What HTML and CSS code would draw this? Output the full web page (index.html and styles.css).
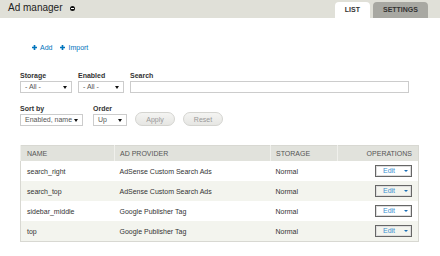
FILE: index.html
```html
<!DOCTYPE html>
<html>
<head>
  <title>Ad manager</title>
  <link rel="stylesheet" href="styles.css">
</head>
<body>
  <div class="top">
    <h1>Ad manager <span class="dot"></span></h1>
    <ul class="tabs">
      <li class="active">List</li>
      <li>Settings</li>
    </ul>
  </div>

  <div class="content">
    <ul class="actions">
      <li><a href="#"><svg class="plus" viewBox="0 0 6 6"><path d="M2 0h2v2h2v2h-2v2h-2v-2h-2v-2h2z"/></svg>Add</a></li>
      <li><a href="#"><svg class="plus" viewBox="0 0 6 6"><path d="M2 0h2v2h2v2h-2v2h-2v-2h-2v-2h2z"/></svg>Import</a></li>
    </ul>

    <!-- Filters -->
    <div class="filters">
      <div class="row">
        <div class="field">
          <label>Storage</label>
          <div class="select w-storage">- All -</div>
        </div>
        <div class="field">
          <label>Enabled</label>
          <div class="select w-enabled">- All -</div>
        </div>
        <div class="field">
          <label>Search</label>
          <div class="text w-search"></div>
        </div>
      </div>
      <div class="row row-sort">
        <div class="field">
          <label>Sort by</label>
          <div class="select w-sort">Enabled, name</div>
        </div>
        <div class="field">
          <label>Order</label>
          <div class="select w-order">Up</div>
        </div>
        <button class="btn">Apply</button>
        <button class="btn">Reset</button>
      </div>
    </div>

    <table class="list">
      <thead>
        <tr>
          <th class="c-name">Name</th>
          <th class="c-prov">Ad provider</th>
          <th class="c-store">Storage</th>
          <th class="c-ops">Operations</th>
        </tr>
      </thead>
      <tbody>
        <tr>
          <td>search_right</td>
          <td>AdSense Custom Search Ads</td>
          <td>Normal</td>
          <td class="c-ops"><span class="edit">Edit<span class="caret"></span></span></td>
        </tr>
        <tr class="even">
          <td>search_top</td>
          <td>AdSense Custom Search Ads</td>
          <td>Normal</td>
          <td class="c-ops"><span class="edit">Edit<span class="caret"></span></span></td>
        </tr>
        <tr>
          <td>sidebar_middle</td>
          <td>Google Publisher Tag</td>
          <td>Normal</td>
          <td class="c-ops"><span class="edit">Edit<span class="caret"></span></span></td>
        </tr>
        <tr class="even">
          <td>top</td>
          <td>Google Publisher Tag</td>
          <td>Normal</td>
          <td class="c-ops"><span class="edit">Edit<span class="caret"></span></span></td>
        </tr>
      </tbody>
    </table>
  </div>
</body>
</html>
```

FILE: styles.css
```css
/* Base */
body {
  margin: 0;
  background-color: #fff;
  color: #333;
  font-family: "Liberation Sans", Arial, sans-serif;
  font-size: 7px;
}

/* Header band with tabs */
.top {
  display: flex;
  justify-content: space-between;
  align-items: flex-end;
  height: 18px;
  padding: 0 12px 0 8px;
  background-color: #e0e0d8;
}

.top h1 {
  margin: 0;
  align-self: flex-start;
  font-size: 10px;
  font-weight: normal;
  line-height: 15px;
  color: #222;
}

.dot {
  display: inline-block;
  position: relative;
  width: 5px;
  height: 5px;
  margin-left: 5px;
  border-radius: 50%;
  background-color: #111;
  vertical-align: 0;
}

.dot:after {
  content: "";
  position: absolute;
  left: 1px;
  top: 2px;
  width: 3px;
  height: 1px;
  background-color: #fff;
}

.tabs {
  display: flex;
  gap: 3px;
  margin: 0;
  padding: 0;
  list-style: none;
}

.tabs li {
  height: 16px;
  line-height: 16px;
  padding: 0 10px;
  border-radius: 4px 4px 0 0;
  background-color: #a8a8a2;
  font-weight: bold;
  text-transform: uppercase;
  color: #333;
}

.tabs li.active {
  background-color: #fff;
}

/* Page content */
.content {
  padding: 26px 21px 0 20px;
}

.actions {
  display: flex;
  gap: 8px;
  margin: 0;
  padding: 0 0 0 12px;
  list-style: none;
  line-height: 8px;
}

.actions a {
  color: #0074bd;
  text-decoration: none;
}

.plus {
  width: 5px;
  height: 5px;
  margin-right: 3px;
  fill: #0074bd;
  vertical-align: 0;
}

/* Filter form */
.filters {
  padding-top: 19px;
}

.row {
  display: flex;
  align-items: flex-end;
  gap: 6px;
}

.row-sort {
  gap: 8px;
  margin-top: 11px;
}

.row-sort .field + .field {
  margin-left: 2px;
}

.field label {
  display: block;
  font-weight: bold;
  line-height: 9px;
  margin-bottom: 1px;
}

.select,
.text {
  box-sizing: border-box;
  position: relative;
  height: 12px;
  line-height: 10px;
  padding-left: 4px;
  border: 1px solid #ccc;
  background-color: #fff;
  color: #555;
}

.select:after {
  content: "";
  position: absolute;
  right: 4px;
  top: 4px;
  border-left: 2px solid transparent;
  border-right: 2px solid transparent;
  border-top: 3px solid #111;
}

.w-storage { width: 52px; }
.w-enabled { width: 46px; }
.w-search  { width: 279px; }
.w-sort    { width: 63px; }
.w-order   { width: 34px; }

.btn {
  box-sizing: border-box;
  width: 40px;
  height: 14px;
  padding: 0;
  border: 1px solid #d4d4d0;
  border-radius: 7px;
  background: linear-gradient(#f4f4f2, #e6e6e3);
  color: #999;
  font-family: inherit;
  font-size: 7px;
}

/* Table */
.list {
  width: 399px;
  margin-top: 19px;
  border-collapse: collapse;
  border: 1px solid #d8d8d2;
}

.list th {
  height: 15px;
  padding: 0 6px 0 5px;
  background-color: #e1e2dc;
  border-left: 1px solid #f0f0ec;
  font-weight: normal;
  text-align: left;
  text-transform: uppercase;
  color: #555;
}

.list td {
  height: 20px;
  padding: 0 6px 0 5px;
  color: #333;
}

.list th:first-child,
.list td:first-child {
  padding-left: 6px;
}

.list tr.even td {
  background-color: #f3f4ee;
}

.c-name  { width: 81px; }
.c-prov  { width: 144px; }
.c-store { width: 55px; }

.list .c-ops {
  text-align: right;
  padding-right: 6px;
}

.edit {
  box-sizing: border-box;
  display: inline-block;
  width: 37px;
  height: 12px;
  line-height: 9px;
  padding-left: 7px;
  border: 1px solid #666;
  box-shadow: inset 0 0 0 1px #ddd;
  background-color: #fff;
  text-align: left;
  color: #3b8fd0;
  vertical-align: middle;
}

.list tr.even .edit {
  background-color: #f3f4ee;
}

.caret {
  display: inline-block;
  margin-left: 9px;
  border-left: 2px solid transparent;
  border-right: 2px solid transparent;
  border-top: 2px solid #1a6fb5;
  vertical-align: middle;
}
```
